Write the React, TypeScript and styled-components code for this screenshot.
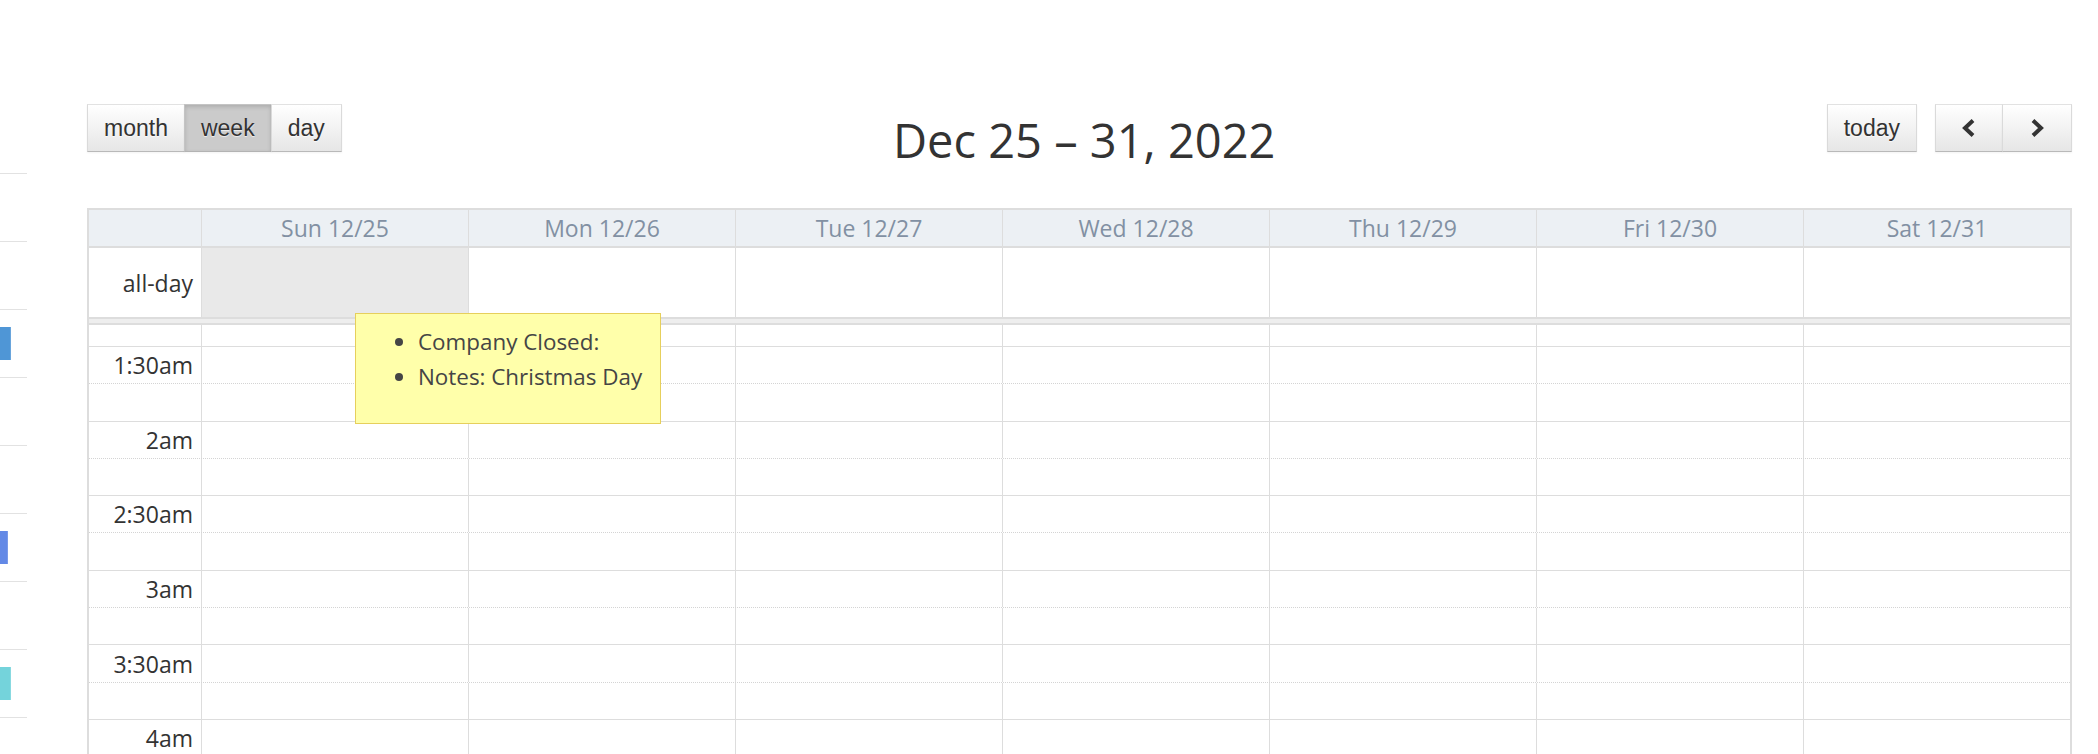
import React from 'react';
import styled, { createGlobalStyle, css } from 'styled-components';

const GlobalStyle = createGlobalStyle`
  html, body {
    margin: 0;
    padding: 0;
    background: #fff;
  }
  body {
    font-family: 'Open Sans', 'Noto Sans', 'DejaVu Sans', sans-serif;
    color: #333;
  }
`;

const Page = styled.div`
  display: flex;
  align-items: flex-start;
  height: 754px;
  overflow: hidden;
`;

// list on the left, scrolled mostly out of view
const Sidebar = styled.div`
  width: 27px;
  flex-shrink: 0;
  overflow: hidden;
  padding-top: 106px;
  display: flex;
  flex-direction: column;
`;

const SideItem = styled.div`
  height: 68px;
  box-sizing: border-box;
  border-bottom: 1px solid #e2e2e2;
  display: flex;
  align-items: center;
`;

const Badge = styled.span<{ $color: string; $peek: number }>`
  flex-shrink: 0;
  width: 80px;
  height: 33px;
  margin-left: ${(p) => p.$peek - 80}px;
  background: ${(p) => p.$color};
  border-right: 1px solid rgba(255, 255, 255, 0.15);
  box-sizing: border-box;
`;

const Calendar = styled.div`
  position: relative;
  margin-left: 60px;
  width: 1985px;
  flex-shrink: 0;
  padding-top: 104px;
`;

const Toolbar = styled.div`
  display: flex;
  justify-content: space-between;
  align-items: flex-start;
  height: 72px;
  margin-bottom: 32px;
`;

const Group = styled.div<{ $gap?: number }>`
  display: flex;
  gap: ${(p) => p.$gap ?? 0}px;
`;

const Joined = styled.div`
  display: flex;
`;

const Button = styled.button<{ $active?: boolean; $wide?: number }>`
  height: 48px;
  margin: 0;
  margin-left: -1px;
  padding: 0 16px;
  min-width: ${(p) => p.$wide ?? 0}px;
  display: flex;
  align-items: center;
  justify-content: center;
  font-family: 'Liberation Sans', Arial, Helvetica, sans-serif;
  font-size: 23px;
  color: #333;
  border: 1px solid;
  border-color: #e2e2e2 #dadada #b9b9b9;
  border-radius: 0;
  background-color: #f5f5f5;
  background-image: linear-gradient(to bottom, #fff, #e6e6e6);
  text-shadow: 0 1px 1px rgba(255, 255, 255, 0.75);
  box-shadow: inset 0 1px 0 rgba(255, 255, 255, 0.2), 0 1px 2px rgba(0, 0, 0, 0.05);
  cursor: pointer;
  &:first-child {
    margin-left: 0;
  }
  ${(p) =>
    p.$active &&
    css`
      background-color: #cbcbcb;
      background-image: none;
      border-color: #c4c4c4 #c4c4c4 #b3b3b3;
      box-shadow: inset 0 2px 4px rgba(0, 0, 0, 0.15), 0 1px 2px rgba(0, 0, 0, 0.05);
    `}
`;

const Title = styled.h2`
  margin: 0;
  font-size: 47px;
  font-weight: 400;
  line-height: 72px;
  color: #333;
  white-space: nowrap;
`;

const Grid = styled.div`
  border: 2px solid #ddd;
  border-bottom: none;
`;

const cols = css`
  display: grid;
  grid-template-columns: 112px repeat(7, 1fr);
`;

const HeadRow = styled.div`
  ${cols};
  height: 38px;
  box-sizing: border-box;
  border-bottom: 2px solid #ddd;
  background: #ecf0f4;
`;

const HeadCell = styled.div<{ $axis?: boolean }>`
  border-left: ${(p) => (p.$axis ? 'none' : '1px solid #ddd')};
  display: flex;
  align-items: center;
  justify-content: center;
  font-size: 23px;
  color: #8290a3;
`;

const AllDayRow = styled.div`
  ${cols};
  height: 71px;
  box-sizing: border-box;
  border-bottom: 2px solid #ddd;
`;

const DayCell = styled.div<{ $shaded?: boolean }>`
  border-left: 1px solid #ddd;
  background: ${(p) => (p.$shaded ? '#e9e9e9' : 'transparent')};
`;

const AxisLabel = styled.div`
  display: flex;
  align-items: center;
  justify-content: flex-end;
  padding-right: 8px;
  font-size: 23px;
  color: #333;
  white-space: nowrap;
`;

const Divider = styled.div`
  height: 6px;
  box-sizing: border-box;
  background: #eee;
  border-bottom: 2px solid #ddd;
`;

const SlotRow = styled.div<{ $minor?: boolean; $h: number }>`
  ${cols};
  height: ${(p) => p.$h}px;
  box-sizing: border-box;
  border-bottom: 1px ${(p) => (p.$minor ? 'dotted #d4d4d4' : 'solid #ddd')};
`;

const Tooltip = styled.div`
  position: absolute;
  left: 268px;
  top: 313px;
  width: 306px;
  height: 111px;
  box-sizing: border-box;
  background: #ffffaa;
  border: 1px solid #e6cf5c;
  padding-top: 10px;
  font-size: 22.4px;
  color: #454545;
`;

const TipList = styled.ul`
  margin: 0;
  padding-left: 62px;
  list-style: disc;
`;

const TipItem = styled.li`
  line-height: 35px;
  white-space: nowrap;
`;

const Chevron = ({ dir }: { dir: 'left' | 'right' }) => (
  <svg width="18" height="20" viewBox="0 0 18 20">
    <polyline
      points={dir === 'left' ? '13,2.5 5,10 13,17.5' : '5,2.5 13,10 5,17.5'}
      fill="none"
      stroke="#333"
      strokeWidth="4"
      strokeLinejoin="miter"
    />
  </svg>
);

const days = ['Sun 12/25', 'Mon 12/26', 'Tue 12/27', 'Wed 12/28', 'Thu 12/29', 'Fri 12/30', 'Sat 12/31'];

// first row is the cut-off bottom of the 1am slot
const slots: { label: string; minor: boolean; h: number }[] = [
  { label: '', minor: false, h: 22 },
  { label: '1:30am', minor: true, h: 37.3 },
  { label: '', minor: false, h: 37.3 },
  { label: '2am', minor: true, h: 37.3 },
  { label: '', minor: false, h: 37.3 },
  { label: '2:30am', minor: true, h: 37.3 },
  { label: '', minor: false, h: 37.3 },
  { label: '3am', minor: true, h: 37.3 },
  { label: '', minor: false, h: 37.3 },
  { label: '3:30am', minor: true, h: 37.3 },
  { label: '', minor: false, h: 37.3 },
  { label: '4am', minor: true, h: 37.3 },
  { label: '', minor: false, h: 37.3 },
];

const sideBadges: Record<number, { color: string; peek: number }> = {
  3: { color: '#4f96d6', peek: 11 },
  6: { color: '#6389e6', peek: 8 },
  8: { color: '#74d3db', peek: 11 },
};

const App: React.FC = () => {
  return (
    <>
      <GlobalStyle />
      <Page>
        <Sidebar>
          {Array.from({ length: 10 }).map((_, i) => (
            <SideItem key={i}>
              {sideBadges[i] && <Badge $color={sideBadges[i].color} $peek={sideBadges[i].peek} />}
            </SideItem>
          ))}
        </Sidebar>

        <Calendar>
          <Toolbar>
            <Group>
              <Joined>
                <Button>month</Button>
                <Button $active>week</Button>
                <Button>day</Button>
              </Joined>
            </Group>
            <Title>Dec 25 – 31, 2022</Title>
            <Group $gap={18}>
              <Button>today</Button>
              <Joined>
                <Button $wide={68} aria-label="prev">
                  <Chevron dir="left" />
                </Button>
                <Button $wide={70} aria-label="next">
                  <Chevron dir="right" />
                </Button>
              </Joined>
            </Group>
          </Toolbar>

          <Grid>
            <HeadRow>
              <HeadCell $axis />
              {days.map((d) => (
                <HeadCell key={d}>{d}</HeadCell>
              ))}
            </HeadRow>
            <AllDayRow>
              <AxisLabel>all-day</AxisLabel>
              {days.map((d, i) => (
                <DayCell key={d} $shaded={i === 0} />
              ))}
            </AllDayRow>
            <Divider />
            {slots.map((s, idx) => (
              <SlotRow key={idx} $minor={s.minor} $h={s.h}>
                <AxisLabel>{s.label}</AxisLabel>
                {days.map((d) => (
                  <DayCell key={d} />
                ))}
              </SlotRow>
            ))}
          </Grid>

          <Tooltip>
            <TipList>
              <TipItem>Company Closed:</TipItem>
              <TipItem>Notes: Christmas Day</TipItem>
            </TipList>
          </Tooltip>
        </Calendar>
      </Page>
    </>
  );
};

export default App;
